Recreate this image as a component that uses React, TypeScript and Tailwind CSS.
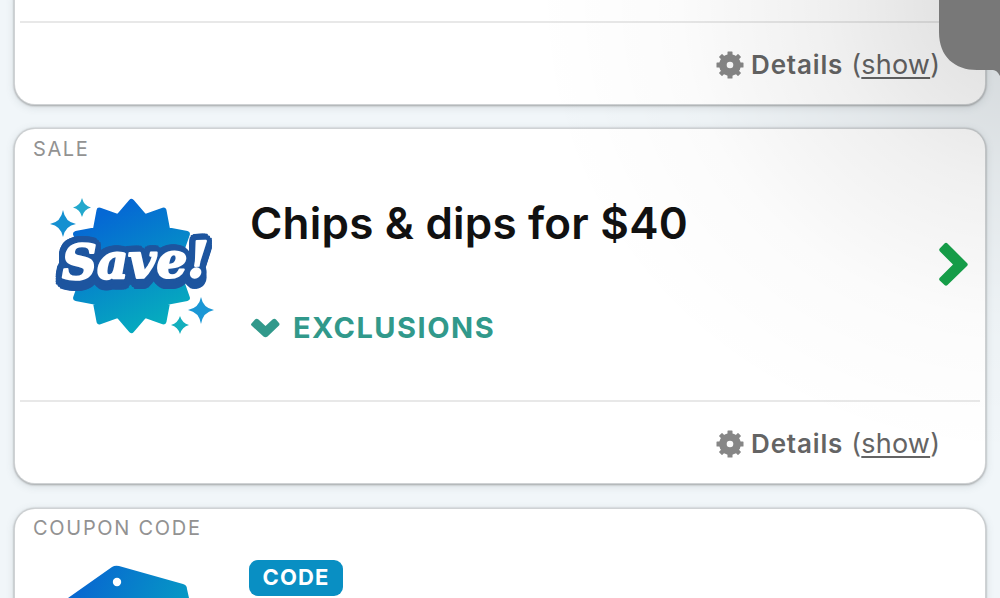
import React from 'react';

const starburst = Array.from({ length: 24 }, (_, i) => {
  const angle = (i * Math.PI) / 12;
  const radius = i % 2 === 0 ? 64 : 50.5;
  return `${101.5 + radius * Math.sin(angle)},${86 - radius * Math.cos(angle)}`;
}).join(' ');

const SaveBadge = () => (
  <svg className="h-[170px] w-[200px]" viewBox="0 0 200 170">
    <defs>
      <linearGradient id="burst" gradientUnits="userSpaceOnUse" x1="72" y1="35" x2="130" y2="150">
        <stop offset="0" stopColor="#0568d4" />
        <stop offset="1" stopColor="#06afbd" />
      </linearGradient>
    </defs>
    <polygon points={starburst} fill="url(#burst)" stroke="url(#burst)" strokeWidth="6" strokeLinejoin="round" />
    <path d="M33 30Q35 42 46 44Q35 46 33 57Q31 46 20 44Q31 42 33 30Z" fill="#1590d1" />
    <path d="M52 18Q54 26 61 27.500Q54 29 52 37Q50 29 43 27.500Q50 26 52 18Z" fill="#22a8cd" />
    <path d="M171 117Q173 128 184 130Q173 132 171 144Q169 132 158 130Q169 128 171 117Z" fill="#1b97d5" />
    <path d="M150 136Q152 143 159 145Q152 147 150 154Q148 147 141 145Q148 143 150 136Z" fill="#13afbd" />
    {/* stacked shadows build the outline, the last one gives the extruded lower edge */}
    <g className="[filter:drop-shadow(2px_0_0_#1d559f)_drop-shadow(-2px_0_0_#1d559f)_drop-shadow(0_2px_0_#1d559f)_drop-shadow(0_-2px_0_#1d559f)_drop-shadow(2px_2px_0_#1d559f)_drop-shadow(-2px_-2px_0_#1d559f)_drop-shadow(1.5px_-1.5px_0_#1d559f)_drop-shadow(-1.5px_1.5px_0_#1d559f)_drop-shadow(0_5px_0_#1d559f)]">
      <text
        x="32"
        y="98"
        fontFamily="'DejaVu Serif', serif"
        fontSize="48"
        fontWeight="700"
        fontStyle="italic"
        textLength="147"
        lengthAdjust="spacingAndGlyphs"
        fill="#fff"
        stroke="#fff"
        strokeWidth="2.2"
        strokeLinejoin="round"
        transform="rotate(-1 100 86)"
      >
        Save<tspan fontSize="49">!</tspan>
      </text>
    </g>
  </svg>
);

const TagIcon = () => (
  <svg className="h-[45px] w-[160px]" viewBox="0 0 160 45">
    <defs>
      <linearGradient id="tag" gradientUnits="userSpaceOnUse" x1="40" y1="10" x2="138" y2="60">
        <stop offset="0" stopColor="#0868d0" />
        <stop offset="1" stopColor="#069cc4" />
      </linearGradient>
    </defs>
    <path d="M18 45L62 14Q65 12 69 13L133 31Q137 32 137 36L139 45Z" fill="url(#tag)" />
    <circle cx="67" cy="29" r="4.200" fill="#fff" />
  </svg>
);

const GearIcon = () => (
  <svg className="size-7" viewBox="-14 -14 28 28" fill="#868686">
    {[0, 90].map((angle) => (
      <rect key={angle} x="-2.500" y="-13.500" width="5" height="27" rx="0.600" transform={`rotate(${angle})`} />
    ))}
    {[45, 135].map((angle) => (
      <rect key={angle} x="-2.200" y="-13.500" width="4.400" height="27" rx="0.600" transform={`rotate(${angle})`} />
    ))}
    <circle r="10.800" />
    <circle r="3.300" fill="#fafafa" />
  </svg>
);

const DetailsRow = () => (
  <div className="mx-[5px] flex h-[83px] items-center border-t-2 border-[#e8e8e8] pl-[696px] pt-[2px] text-[26px] text-[#646464]">
    <GearIcon />
    <span className="ml-[7px] font-semibold tracking-[0.85px]">Details</span>
    <span className="ml-[8px] mt-px text-[27px] font-normal tracking-[0.2px]">
      (<span className="underline decoration-2 underline-offset-[3px]">show</span>)
    </span>
  </div>
);

const Card = ({ className, children }: { className: string; children: React.ReactNode }) => (
  <section
    className={`mx-[15px] flex flex-col rounded-[20px] bg-white shadow-[0_0_0_1px_#cfd2d4,0_0_2px_1px_#b4b7b9,0_1px_2px_1px_#a8abad,0_2px_10px_rgba(80,95,105,0.22)] ${className}`}
  >
    {children}
  </section>
);

const App = () => {
  return (
    <main className="relative h-[598px] w-[1000px] overflow-hidden bg-[#f1f6f9] font-['Inter',sans-serif]">
      <Card className="-mt-5 h-[124px] justify-end">
        <DetailsRow />
      </Card>

      <Card className="mt-[25px] h-[354px]">
        <div className="flex h-[271px] flex-col">
          <p className="ml-[18px] mt-[7px] h-[26px] text-[20px] leading-[26px] tracking-[1.6px] text-[#929292]">SALE</p>
          <div className="ml-[15px] mt-[18px] flex">
            <SaveBadge />
            <div className="ml-[20px] w-[689px]">
              <h2 className="mt-[14px] text-[44px] font-semibold leading-[58px] tracking-[0.2px] text-[#111]">
                Chips &amp; dips for $40
              </h2>
              <div className="mt-[57px] flex items-center gap-[13px] text-[#31998b]">
                <svg className="h-[22px] w-[30px]" viewBox="0 0 30 22">
                  <path
                    d="M1.500 6.500L5 2.500Q6.500 1 8.500 2.500L15.500 9L22.500 2.500Q24.500 1 26 2.500L29 6Q30 7 29 8.500L17.500 19.500Q15.500 21 13.500 19.500L1.500 8.500Q0.500 7.500 1.500 6.500Z"
                    fill="currentColor"
                  />
                </svg>
                <span className="text-[29px] font-bold leading-[38px] tracking-[1.5px]">EXCLUSIONS</span>
              </div>
            </div>
            <svg className="mt-[60px] h-[48px] w-[32px]" viewBox="0 0 32 48">
              <path
                d="M0.700 8.500L5.500 3.500Q7 2 8.500 3.500L28 23Q29.500 24.500 28 26L8.500 45Q7 46.500 5.500 45L0.700 40.500Q-0.500 39 1 37.500L14 24.500L1 11.500Q-0.500 10 0.700 8.500Z"
                fill="#16a14a"
              />
            </svg>
          </div>
        </div>
        <DetailsRow />
      </Card>

      <Card className="mt-[26px] h-[130px]">
        <p className="ml-[18px] mt-[6px] h-[26px] text-[20px] leading-[26px] tracking-[1.7px] text-[#929292]">
          COUPON CODE
        </p>
        <div className="ml-[35px] mt-[12px] flex">
          <TagIcon />
          <span className="ml-[39px] mt-[7px] flex h-9 w-[94px] items-center justify-center rounded-[9px] bg-[#098fc3] pb-px text-[22px] font-bold tracking-[1.1px] text-white">
            CODE
          </span>
        </div>
      </Card>

      {/* soft shadow cast by the panel in the corner */}
      <div className="pointer-events-none absolute inset-0 bg-[radial-gradient(ellipse_490px_460px_at_1020px_0px,rgba(0,0,0,0.14),rgba(0,0,0,0.06)_40%,rgba(0,0,0,0.015)_70%,transparent)]" />
      <svg className="absolute right-0 top-0 h-20 w-[61px]" viewBox="0 0 61 80">
        <path d="M0 0V32C0 57 16 70 38 70H54Q58 70 61 76V0Z" fill="#787878" />
      </svg>
    </main>
  );
};

export default App;
